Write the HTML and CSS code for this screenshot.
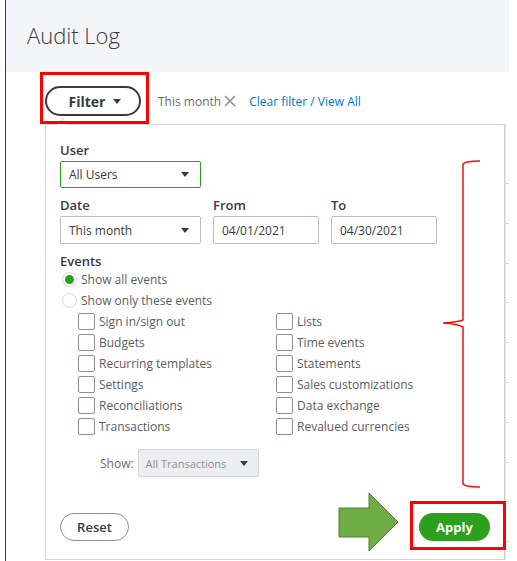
FILE: index.html
```html
<!doctype html>
<html>
<head>
  <meta charset="utf-8">
  <title>Audit Log</title>
  <link rel="stylesheet" href="styles.css">
</head>
<body>

  <div class="frame">
    <div class="page-head">
      <h1>Audit Log</h1>
    </div>

    <div class="content">
      <div class="filter-bar">
        <button class="filter-btn">Filter <span class="caret"></span></button>
        <span class="chip">This month
          <svg width="12" height="12" viewBox="0 0 12 12"><path d="M1 1 L11 11 M11 1 L1 11" stroke="#8d9096" stroke-width="1.6" fill="none"/></svg>
        </span>
        <a class="clear-link" href="#">Clear filter / View All</a>
      </div>

      <div class="results">
        <div class="popover">
          <div class="field-label">User</div>
          <div class="select select-user">All Users <span class="caret"></span></div>

          <div class="date-row">
            <div class="date-col">
              <div class="field-label">Date</div>
              <div class="select">This month <span class="caret"></span></div>
            </div>
            <div class="date-col narrow">
              <div class="field-label">From</div>
              <div class="input">04/01/2021</div>
            </div>
            <div class="date-col narrow">
              <div class="field-label">To</div>
              <div class="input">04/30/2021</div>
            </div>
          </div>

          <div class="field-label events-label">Events</div>
          <label class="radio"><span class="dot on"></span>Show all events</label>
          <label class="radio"><span class="dot"></span>Show only these events</label>

          <div class="event-grid">
            <label class="check"><span class="box"></span>Sign in/sign out</label>
            <label class="check"><span class="box"></span>Lists</label>
            <label class="check"><span class="box"></span>Budgets</label>
            <label class="check"><span class="box"></span>Time events</label>
            <label class="check"><span class="box"></span>Recurring templates</label>
            <label class="check"><span class="box"></span>Statements</label>
            <label class="check"><span class="box"></span>Settings</label>
            <label class="check"><span class="box"></span>Sales customizations</label>
            <label class="check"><span class="box"></span>Reconciliations</label>
            <label class="check"><span class="box"></span>Data exchange</label>
            <label class="check"><span class="box"></span>Transactions</label>
            <label class="check"><span class="box"></span>Revalued currencies</label>
          </div>

          <div class="show-row">
            <span class="show-label">Show:</span>
            <div class="select disabled">All Transactions <span class="caret"></span></div>
          </div>

          <div class="popover-foot">
            <button class="btn-reset">Reset</button>
            <button class="btn-apply">Apply</button>
          </div>
        </div>

        <div class="table-edge">
          <div class="edge-top"></div>
          <div class="edge-row"></div>
          <div class="edge-row"></div>
          <div class="edge-row"></div>
          <div class="edge-row"></div>
          <div class="edge-row"></div>
          <div class="edge-row"></div>
          <div class="edge-row"></div>
          <div class="edge-row"></div>
          <div class="edge-row"></div>
        </div>
      </div>
    </div>
  </div>

  <!-- markup drawn on top of the page -->
  <div class="marks">
    <div class="mark-box mark-filter"></div>
    <div class="mark-box mark-apply"></div>
    <svg class="mark-svg" width="517" height="561" viewBox="0 0 517 561">
      <path d="M480 161 Q466 161 463 164 L463 320 Q458 322 443 323 Q458 324 463 327 L463 484 Q466 487 480 487"
            stroke="#ee1111" stroke-width="1.5" fill="none"/>
      <polygon points="339,508 369,508 369,493 398,522 369,551 369,537 339,537"
               fill="#70ad47" stroke="#507e32" stroke-width="1"/>
    </svg>
  </div>

</body>
</html>
```

FILE: styles.css
```css
body {
  margin: 0;
  font-family: "Open Sans", "Liberation Sans", sans-serif;
  color: #393a3d;
  background: #fff;
}
.frame {
  margin-left: 5px;
  width: 503px;
  height: 561px;
  border-left: 1px solid #3a3a3a;
  overflow: hidden;
}
.page-head {
  height: 72px;
  background: #f4f5f8;
  padding-left: 21px;
  box-sizing: border-box;
}
.page-head h1 {
  margin: 0;
  padding-top: 20px;
  font-size: 22px;
  line-height: 30px;
  font-weight: 300;
  color: #393a3d;
}
.content {
  padding-left: 39px;
}
.filter-bar {
  display: flex;
  align-items: center;
  height: 30px;
  margin-top: 14px;
}
.filter-btn {
  width: 96px;
  height: 30px;
  box-sizing: border-box;
  border: 2px solid #393a3d;
  border-radius: 16px;
  background: #fff;
  font-family: inherit;
  font-size: 14px;
  font-weight: 700;
  color: #393a3d;
  display: flex;
  align-items: center;
  justify-content: center;
  gap: 8px;
  padding: 0 0 0 4px;
}
.caret {
  display: inline-block;
  width: 0;
  height: 0;
  border-left: 4px solid transparent;
  border-right: 4px solid transparent;
  border-top: 5px solid #393a3d;
}
.chip {
  margin-left: 17px;
  font-size: 12px;
  color: #6b6c72;
  display: flex;
  align-items: center;
  gap: 3px;
}
.clear-link {
  margin-left: 13px;
  font-size: 12px;
  color: #0077c5;
  text-decoration: none;
}

/* dropdown panel and the table rows peeking out behind it */
.results {
  display: flex;
  margin-top: 8px;
}
.popover {
  position: relative;
  width: 460px;
  box-sizing: border-box;
  border: 1px solid #d4d7dc;
  border-right-color: #d0d0d0;
  box-shadow: 1px 0 0 #e2e2e2;
  padding: 16px 14px 18px 14px;
  background: #fff;
}
.popover::before {
  content: "";
  position: absolute;
  top: -5px;
  left: 12px;
  width: 8px;
  height: 8px;
  background: #fff;
  border-left: 1px solid #d4d7dc;
  border-top: 1px solid #d4d7dc;
  transform: rotate(45deg);
}
.field-label {
  font-size: 13px;
  font-weight: 600;
  line-height: 18px;
  color: #393a3d;
  margin-bottom: 2px;
}
.select, .input {
  height: 28px;
  box-sizing: border-box;
  border: 1px solid #babec5;
  border-radius: 2px;
  font-size: 12px;
  color: #393a3d;
  display: flex;
  align-items: center;
  justify-content: space-between;
  padding: 0 11px 0 8px;
}
.select-user {
  width: 141px;
  height: 27px;
  border-color: #2ca01c;
}
.date-row {
  display: flex;
  gap: 12px;
  margin-top: 8px;
}
.date-col {
  width: 141px;
}
.date-col.narrow {
  width: 106px;
}
.events-label {
  margin-top: 8px;
  margin-bottom: 0;
}
.radio {
  display: flex;
  align-items: center;
  height: 21px;
  font-size: 12px;
  color: #5b5c61;
}
.radio:first-of-type {
  margin-top: -1px;
}
.dot {
  width: 15px;
  height: 15px;
  box-sizing: border-box;
  border: 1px solid #d4d7dc;
  border-radius: 50%;
  margin: 0 4px 0 2px;
  display: flex;
  align-items: center;
  justify-content: center;
}
.dot.on::after {
  content: "";
  width: 9px;
  height: 9px;
  border-radius: 50%;
  background: #2ca01c;
}
.event-grid {
  display: grid;
  grid-template-columns: 198px 198px;
  padding-left: 18px;
}
.check {
  display: flex;
  align-items: center;
  height: 21px;
  font-size: 12px;
  color: #5b5c61;
}
.box {
  width: 17px;
  height: 17px;
  box-sizing: border-box;
  border: 1px solid #8d9096;
  border-radius: 2px;
  margin-right: 4px;
}
.show-row {
  display: flex;
  align-items: center;
  margin-top: 12px;
  padding-left: 40px;
  gap: 4px;
}
.show-label {
  font-size: 12px;
  color: #6b6c72;
}
.select.disabled {
  width: 121px;
  background: #eceef1;
  border-color: #d4d7dc;
  color: #8d9096;
  font-size: 11px;
  padding: 0 10px 0 7px;
}
.popover-foot {
  display: flex;
  justify-content: space-between;
  margin-top: 36px;
}
.btn-reset, .btn-apply {
  height: 28px;
  border-radius: 15px;
  font-family: inherit;
  font-size: 13px;
  font-weight: 600;
  box-sizing: border-box;
}
.btn-reset {
  width: 69px;
  background: #fff;
  border: 1px solid #8d9096;
  color: #393a3d;
}
.btn-apply {
  width: 71px;
  background: #2ca01c;
  border: none;
  color: #fff;
  font-weight: 700;
}
.table-edge {
  width: 4px;
}
.edge-top {
  height: 59px;
  border-bottom: 1px solid #d6d6d6;
}
.edge-row {
  height: 38.8px;
  border-bottom: 1px solid #d6d6d6;
}

/* red boxes, brace and arrow */
.marks {
  position: absolute;
  top: 0;
  left: 0;
  width: 517px;
  height: 561px;
  pointer-events: none;
}
.mark-svg {
  position: absolute;
  top: 0;
  left: 0;
}
.mark-box {
  position: absolute;
  border: 3px solid #ff0000;
  box-sizing: border-box;
}
.mark-filter {
  left: 40px;
  top: 72px;
  width: 109px;
  height: 52px;
}
.mark-apply {
  left: 410px;
  top: 501px;
  width: 96px;
  height: 49px;
}
```
